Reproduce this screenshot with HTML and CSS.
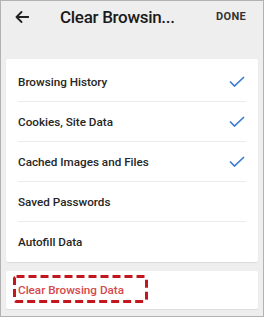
FILE: index.html
```html
<!DOCTYPE html>
<html>
<head>
<meta charset="utf-8">
<link rel="stylesheet" href="styles.css">
</head>
<body>
<div class="frame">
  <header class="topbar">
    <svg class="back" width="14" height="12" viewBox="0 0 14 12"><path d="M13.5 6H1.5M6.5 1L1.5 6l5 5" fill="none" stroke="#222" stroke-width="1.8" stroke-linecap="round" stroke-linejoin="round"/></svg>
    <div class="title">Clear Browsin...</div>
    <div class="done">DONE</div>
  </header>
  <main class="content">
    <section class="card list">
      <div class="row"><span>Browsing History</span><svg class="check" width="16" height="11" viewBox="0 0 16 11"><path d="M1 5.5L5.5 10L15 1" fill="none" stroke="#3d7bd4" stroke-width="1.7"/></svg></div>
      <div class="row"><span>Cookies, Site Data</span><svg class="check" width="16" height="11" viewBox="0 0 16 11"><path d="M1 5.5L5.5 10L15 1" fill="none" stroke="#3d7bd4" stroke-width="1.7"/></svg></div>
      <div class="row"><span>Cached Images and Files</span><svg class="check" width="16" height="11" viewBox="0 0 16 11"><path d="M1 5.5L5.5 10L15 1" fill="none" stroke="#3d7bd4" stroke-width="1.7"/></svg></div>
      <div class="row"><span>Saved Passwords</span></div>
      <div class="row last"><span>Autofill Data</span></div>
    </section>
    <section class="card action">
      <span class="clear">Clear Browsing Data</span>
      <svg class="highlight" width="136" height="28" viewBox="0 0 136 28"><rect x="1.5" y="1.5" width="132" height="25" rx="2" fill="none" stroke="#c4161f" stroke-width="3" stroke-dasharray="8 4"/></svg>
    </section>
  </main>
</div>
</body>
</html>
```
FILE: styles.css
```css
* { box-sizing: border-box; }
html, body { margin: 0; padding: 0; }
body { width: 264px; height: 317px; overflow: hidden; font-family: Roboto, "Liberation Sans", sans-serif; color: #212121; }
.frame { width: 264px; height: 317px; border: 1px solid #b2b2b2; background: #eeeeee; display: flex; flex-direction: column; }
.topbar { height: 31px; display: flex; align-items: center; padding-left: 14px; }
.back { flex: none; }
.title { margin-left: 31px; font-size: 17px; font-weight: 500; white-space: nowrap; letter-spacing: -0.3px; color: #1a1a1a; }
.done { margin-left: auto; margin-right: 17px; font-size: 11px; font-weight: 700; color: #333; letter-spacing: 0.3px; }
.content { padding: 27px 5px 0; display: flex; flex-direction: column; gap: 9px; }
.card { background: #fff; border-radius: 2px; box-shadow: 0 1px 1px rgba(0,0,0,0.08); }
.list { padding-top: 3px; }
.row { height: 40px; margin: 0 12px; display: flex; align-items: center; justify-content: space-between; border-bottom: 1px solid #ebebeb; font-size: 11.7px; font-weight: 500; color: #262626; }
.row.last { border-bottom: none; }
.check { margin-right: 1px; }
.action { position: relative; height: 38px; display: flex; align-items: center; padding-left: 12px; }
.clear { font-size: 11.7px; font-weight: 500; color: #d5494c; }
.highlight { position: absolute; left: 7px; top: 4px; }
```
